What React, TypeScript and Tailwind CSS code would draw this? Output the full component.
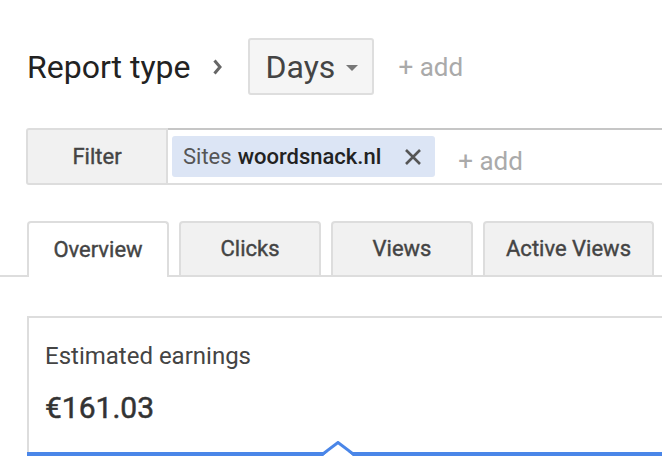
import React from "react";

const tabs = [
    { label: "Overview", width: "w-[142px]", active: true },
    { label: "Clicks", width: "w-[142px]", active: false },
    { label: "Views", width: "w-[142px]", active: false },
    { label: "Active Views", width: "w-[171px]", active: false },
];

export default function App() {
    return (
        <div className="w-[662px] h-[462px] overflow-hidden bg-white font-['Roboto',sans-serif]">
            {/* report type row */}
            <div className="flex items-center pt-[38px] pl-[27px] h-[95px]">
                <span className="text-[32px] leading-none text-[#222]">Report type</span>
                <svg width="9" height="16" viewBox="0 0 9 16" className="ml-[23px]">
                    <polyline points="1.5,1.5 7,8 1.5,14.5" fill="none" stroke="#666" strokeWidth="3" />
                </svg>
                <div className="ml-[26px] w-[126px] h-[57px] flex items-center pl-[15px] bg-[#f5f5f5] border-2 border-[#dedede] rounded-[3px]">
                    <span className="text-[32px] leading-none text-[#444]">Days</span>
                    <svg width="12" height="6" viewBox="0 0 12 6" className="ml-[11px] mt-[2px]">
                        <polygon points="0,0 12,0 6,6" fill="#777" />
                    </svg>
                </div>
                <span className="ml-[24px] text-[26px] leading-none text-[#aaa]">+ add</span>
            </div>

            {/* filter row */}
            <div className="flex mt-[33px] ml-[26px] h-[57px]">
                <div className="w-[142px] flex items-center justify-center bg-[#f1f1f1] border-2 border-[#dddddd] rounded-l-[3px]">
                    <span className="text-[22px] leading-none text-[#444] [-webkit-text-stroke:0.4px_#444]">Filter</span>
                </div>
                <div className="flex-1 flex items-center pl-[4px] border-t-2 border-t-[#c6c6c6] border-b-2 border-b-[#dddddd]">
                    <div className="h-[41px] flex items-center pl-[11px] pr-[13px] bg-[#dce5f5] rounded-[3px]">
                        <span className="text-[22px] leading-none text-[#555]">Sites</span>
                        <span className="ml-[6px] text-[22px] leading-none font-medium text-[#222]">woordsnack.nl</span>
                        <svg width="18" height="18" viewBox="0 0 18 18" className="ml-[23px]">
                            <path d="M2 2 L16 16 M16 2 L2 16" stroke="#555" strokeWidth="2.6" />
                        </svg>
                    </div>
                    <span className="ml-[23px] mt-[8px] text-[26px] leading-none text-[#aaa]">+ add</span>
                </div>
            </div>

            {/* tabs */}
            <div className="flex gap-[10px] pl-[27px] mt-[36px] border-b-2 border-[#dddddd]">
                {tabs.map((tab) => (
                    <div
                        key={tab.label}
                        className={
                            tab.active
                                ? `${tab.width} h-[56px] -mb-[2px] flex items-center justify-center bg-white border-2 border-b-0 border-[#dddddd] rounded-t-[4px]`
                                : `${tab.width} h-[54px] flex items-center justify-center bg-[#f1f1f1] border-2 border-b-0 border-[#dddddd] rounded-t-[4px]`
                        }
                    >
                        <span className="text-[22px] leading-none text-[#444] [-webkit-text-stroke:0.4px_#444]">{tab.label}</span>
                    </div>
                ))}
            </div>

            {/* earnings card */}
            <div className="mt-[39px] ml-[27px] border-t-2 border-l-2 border-[#dddddd] pt-[26px] pl-[16px] pb-[29px]">
                <div className="text-[24px] leading-none text-[#444]">Estimated earnings</div>
                <div className="mt-[25px] text-[30px] leading-none text-[#333] [-webkit-text-stroke:0.5px_#333]">€161.03</div>
            </div>
            <div className="relative ml-[27px] h-[4px] bg-[#4a86e8]">
                <svg width="32" height="15" viewBox="0 0 32 15" className="absolute left-[295px] top-[-11px]">
                    <polygon points="1,15 16,2 31,15" fill="white" />
                    <polyline points="0,13.5 16,1.5 32,13.5" fill="none" stroke="#4a86e8" strokeWidth="3" />
                </svg>
            </div>
        </div>
    );
}
